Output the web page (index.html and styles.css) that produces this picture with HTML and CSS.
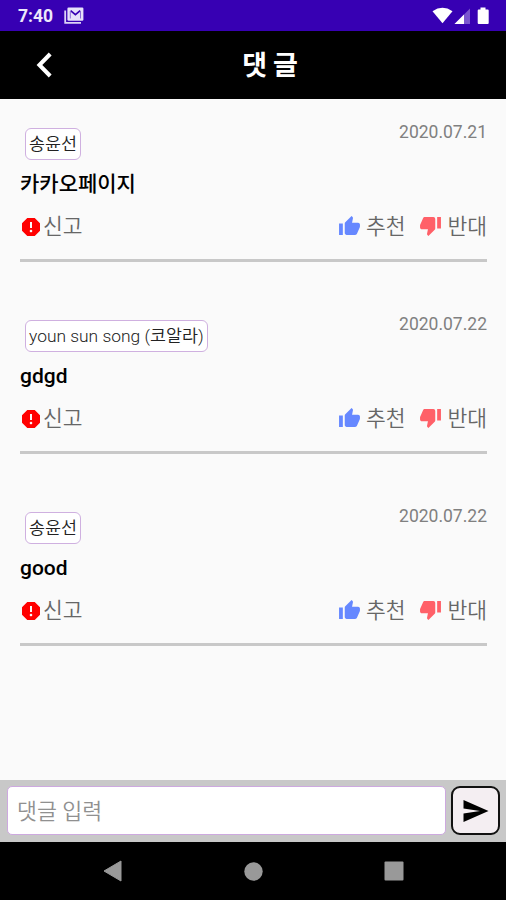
FILE: index.html
```html
<!DOCTYPE html>
<html lang="ko">
<head>
    <meta charset="UTF-8">
    <meta name="viewport" content="width=device-width, initial-scale=1.0">
    <title>댓글</title>
    <link rel="stylesheet" href="styles.css">
</head>
<body>

    <!-- icons used in every comment -->
    <svg class="sprite" aria-hidden="true">
        <symbol id="report" viewBox="3 3 18 18">
            <path d="M15.73 3H8.27L3 8.27v7.46L8.27 21h7.46L21 15.73V8.27L15.73 3zM12 17.3c-.72 0-1.3-.58-1.3-1.3s.58-1.3 1.3-1.3 1.3.58 1.3 1.3-.58 1.3-1.3 1.3zm1-4.3h-2V7h2v6z"/>
        </symbol>
        <symbol id="up" viewBox="1 1 22 20">
            <path d="M1 21h4V9H1v12zm22-11c0-1.1-.9-2-2-2h-6.31l.95-4.57.03-.32c0-.41-.17-.79-.44-1.06L14.17 1 7.59 7.59C7.22 7.95 7 8.45 7 9v10c0 1.1.9 2 2 2h9c.83 0 1.54-.5 1.84-1.22l3.02-7.05c.09-.23.14-.47.14-.73v-2z"/>
        </symbol>
        <symbol id="down" viewBox="1 3 22 20">
            <path d="M15 3H6c-.83 0-1.54.5-1.84 1.22l-3.02 7.05c-.09.23-.14.47-.14.73v2c0 1.1.9 2 2 2h6.31l-.95 4.57-.03.32c0 .41.17.79.44 1.06L9.83 23l6.59-6.59c.36-.36.58-.86.58-1.41V5c0-1.1-.9-2-2-2zm4 0v12h4V3h-4z"/>
        </symbol>
    </svg>

    <div class="status">
        <span class="time">7:40</span>
        <svg class="mail" width="20" height="17" viewBox="0 0 20 17">
            <path d="M1.2 3.5v12.3H17" fill="none" stroke="#dcd4f6" stroke-width="1.8"/>
            <rect x="3.4" y="0.6" width="16" height="13.2" rx="1.2" fill="#e6e0fa"/>
            <path d="M6.6 3.6l4.8 4L16.2 3.6" fill="none" stroke="#3700b3" stroke-width="1.7"/>
            <path d="M6.3 4v7.5M16.5 4v7.5" fill="none" stroke="#8a6cd6" stroke-width="1"/>
        </svg>
        <svg class="signals" width="58" height="18" viewBox="0 0 58 18">
            <path d="M0.5 4.2Q10.5 -2.6 20.5 4.2L10.5 16.2z" fill="#fff"/>
            <path d="M22.5 17L38 1.5V17z" fill="#7a55cf"/>
            <path d="M22.5 17L32 7.5V17z" fill="#fff"/>
            <path d="M48.5 0.5h5v2h2.2q1 0 1 1V16q0 1-1 1h-9q-1 0-1-1V3.5q0-1 1-1h1.8z" fill="#fff"/>
        </svg>
    </div>

    <header>
        <svg class="back" width="16" height="26" viewBox="0 0 16 26">
            <path d="M14.2 2L3.4 13 14.2 24" fill="none" stroke="#fff" stroke-width="4"/>
        </svg>
        <h1>댓글</h1>
    </header>

    <main>
        <article class="comment">
            <div class="top">
                <span class="name">송윤선</span>
                <time>2020.07.21</time>
            </div>
            <p class="text">카카오페이지</p>
            <div class="actions">
                <span class="report"><svg><use href="#report"/></svg>신고</span>
                <span class="up"><svg><use href="#up"/></svg>추천</span>
                <span class="down"><svg><use href="#down"/></svg>반대</span>
            </div>
        </article>
        <article class="comment">
            <div class="top">
                <span class="name">youn sun song (코알라)</span>
                <time>2020.07.22</time>
            </div>
            <p class="text">gdgd</p>
            <div class="actions">
                <span class="report"><svg><use href="#report"/></svg>신고</span>
                <span class="up"><svg><use href="#up"/></svg>추천</span>
                <span class="down"><svg><use href="#down"/></svg>반대</span>
            </div>
        </article>
        <article class="comment">
            <div class="top">
                <span class="name">송윤선</span>
                <time>2020.07.22</time>
            </div>
            <p class="text">good</p>
            <div class="actions">
                <span class="report"><svg><use href="#report"/></svg>신고</span>
                <span class="up"><svg><use href="#up"/></svg>추천</span>
                <span class="down"><svg><use href="#down"/></svg>반대</span>
            </div>
        </article>
    </main>

    <form class="write">
        <input type="text" placeholder="댓글 입력">
        <button type="button" aria-label="send">
            <svg width="26" height="22" viewBox="0 0 26 22">
                <path d="M0.5 0L25.5 11 0.5 22V13.5L17 11 0.5 8.5z" fill="#000"/>
            </svg>
        </button>
    </form>

    <nav>
        <svg width="19" height="22" viewBox="0 0 19 22"><path d="M18 1v20L1 11z" fill="#999" stroke="#999" stroke-linejoin="round"/></svg>
        <svg width="19" height="19" viewBox="0 0 19 19"><circle cx="9.5" cy="9.5" r="9.2" fill="#999"/></svg>
        <svg width="20" height="20" viewBox="0 0 20 20"><rect x="0.5" y="0.5" width="19" height="19" rx="1" fill="#999"/></svg>
    </nav>

</body>
</html>
```
FILE: styles.css
```css
* {
    box-sizing: border-box;
}
body {
    margin: 0;
    height: 900px;
    display: flex;
    flex-direction: column;
    background-color: #fafafa;
    font-family: Roboto, "Noto Sans CJK KR", sans-serif;
    overflow: hidden;
}
svg {
    display: block;
    flex: none;
}
.sprite {
    position: absolute;
    width: 0;
    height: 0;
}
.status {
    height: 31px;
    padding: 0 16px 0 18px;
    display: flex;
    align-items: center;
    background-color: #3700b3;
    color: #ece8fa;
}
.time {
    width: 46px;
    font-size: 17.5px;
    font-weight: 700;
    line-height: 32px;
}
.signals {
    margin-left: auto;
}
header {
    height: 68px;
    padding-left: 36px;
    display: grid;
    grid-template-columns: 16px 1fr 12px;
    align-items: center;
    background-color: #000;
    color: #fff;
}
.back {
    margin-top: -1px;
}
h1 {
    margin: 0;
    padding-top: 2px;
    font-size: 27px;
    font-weight: 700;
    line-height: 40px;
    letter-spacing: 6px;
    text-align: center;
}
main {
    flex: 1;
    padding: 0 19px 0 20px;
}
.comment {
    height: 192px;
    padding-top: 23px;
}
.top {
    display: flex;
    justify-content: space-between;
    align-items: flex-start;
    height: 38px;
}
.name {
    height: 32px;
    margin: 6px 0 0 5px;
    padding: 0 3px;
    border: 1px solid #cfb0e0;
    border-radius: 6px;
    background-color: #fff;
    color: #222;
    font-size: 17.4px;
    font-weight: 350;
    line-height: 31px;
}
time {
    color: #808080;
    font-size: 17.5px;
    line-height: 20px;
}
.text {
    margin: 0;
    height: 46px;
    color: #000;
    font-size: 21px;
    font-weight: 500;
    line-height: 49px;
}
.actions {
    display: flex;
    align-items: center;
    height: 56px;
    padding-bottom: 12px;
    border-bottom: 3px solid #c8c8c8;
    color: #666;
    font-size: 21.5px;
    font-weight: 350;
    line-height: 36px;
}
.actions span {
    display: flex;
    align-items: center;
}
.report svg {
    width: 18px;
    height: 18px;
    margin: 0 3px 0 2px;
    fill: #ff0000;
}
.up {
    margin-left: auto;
}
.up svg {
    width: 21px;
    height: 19px;
    margin: 0 6px 2px 0;
    fill: #6688ff;
}
.down {
    margin-left: 15px;
}
.down svg {
    width: 21px;
    height: 19px;
    margin: 0 6px 0 0;
    fill: #ff6068;
}
.write {
    height: 62px;
    padding: 6px 6px 7px 7px;
    display: flex;
    gap: 5px;
    background-color: #c8c8c8;
}
.write input {
    flex: 1;
    min-width: 0;
    padding: 2px 9px 0;
    border: 1px solid #cda9df;
    border-radius: 5px;
    background-color: #fff;
    font-family: inherit;
    font-size: 21.7px;
    font-weight: 350;
}
.write input::placeholder {
    color: #909090;
}
.write button {
    width: 49px;
    padding: 0;
    display: flex;
    align-items: center;
    justify-content: center;
    border: 2px solid #111;
    border-radius: 9px;
    background-color: #f4eef2;
}
nav {
    height: 58px;
    padding: 0 102px 0 103px;
    display: flex;
    justify-content: space-between;
    align-items: center;
    background-color: #000;
}
```
